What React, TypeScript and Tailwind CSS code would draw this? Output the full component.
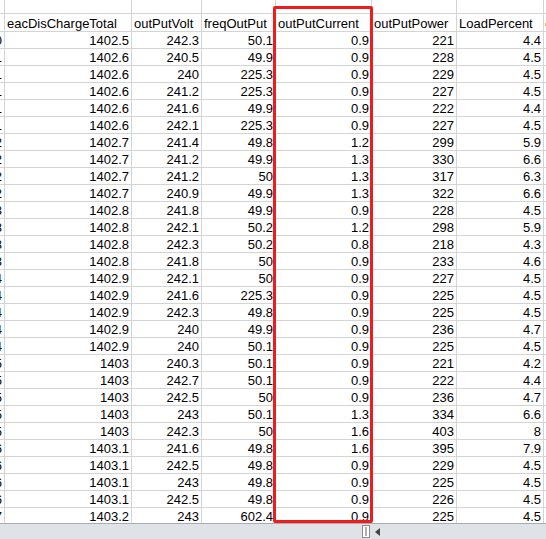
import type React from 'react';

// column widths incl. the 1px right grid line
const COL_W = [
  'w-[5px]',
  'w-[127px]',
  'w-[70px]',
  'w-[74px]',
  'w-[96px]',
  'w-[85px]',
  'w-[87px]',
];

const HEADERS = [
  'eacDisChargeTotal',
  'outPutVolt',
  'freqOutPut',
  'outPutCurrent',
  'outPutPower',
  'LoadPercent',
];

// [clipped digit of previous column, total, volt, freq, current, power, load]
const ROWS: string[][] = [
  ['0', '1402.5', '242.3', '50.1', '0.9', '221', '4.4'],
  ['1', '1402.6', '240.5', '49.9', '0.9', '228', '4.5'],
  ['1', '1402.6', '240', '225.3', '0.9', '229', '4.5'],
  ['1', '1402.6', '241.2', '225.3', '0.9', '227', '4.5'],
  ['1', '1402.6', '241.6', '49.9', '0.9', '222', '4.4'],
  ['1', '1402.6', '242.1', '225.3', '0.9', '227', '4.5'],
  ['2', '1402.7', '241.4', '49.8', '1.2', '299', '5.9'],
  ['2', '1402.7', '241.2', '49.9', '1.3', '330', '6.6'],
  ['2', '1402.7', '241.2', '50', '1.3', '317', '6.3'],
  ['2', '1402.7', '240.9', '49.9', '1.3', '322', '6.6'],
  ['3', '1402.8', '241.8', '49.9', '0.9', '228', '4.5'],
  ['3', '1402.8', '242.1', '50.2', '1.2', '298', '5.9'],
  ['3', '1402.8', '242.3', '50.2', '0.8', '218', '4.3'],
  ['3', '1402.8', '241.8', '50', '0.9', '233', '4.6'],
  ['4', '1402.9', '242.1', '50', '0.9', '227', '4.5'],
  ['4', '1402.9', '241.6', '225.3', '0.9', '225', '4.5'],
  ['4', '1402.9', '242.3', '49.8', '0.9', '225', '4.5'],
  ['4', '1402.9', '240', '49.9', '0.9', '236', '4.7'],
  ['4', '1402.9', '240', '50.1', '0.9', '225', '4.5'],
  ['5', '1403', '240.3', '50.1', '0.9', '221', '4.2'],
  ['5', '1403', '242.7', '50.1', '0.9', '222', '4.4'],
  ['5', '1403', '242.5', '50', '0.9', '236', '4.7'],
  ['5', '1403', '243', '50.1', '1.3', '334', '6.6'],
  ['5', '1403', '242.3', '50', '1.6', '403', '8'],
  ['6', '1403.1', '241.6', '49.8', '1.6', '395', '7.9'],
  ['6', '1403.1', '242.5', '49.8', '0.9', '229', '4.5'],
  ['6', '1403.1', '243', '49.8', '0.9', '225', '4.5'],
  ['6', '1403.1', '242.5', '49.8', '0.9', '226', '4.5'],
  ['7', '1403.2', '243', '602.4', '0.9', '225', '4.5'],
];

const cellBase =
  'shrink-0 h-full border-r border-[#d4d4d4] overflow-hidden whitespace-nowrap flex items-end';

const SheetRow: React.FC<{ cells: string[]; header?: boolean }> = ({
  cells,
  header,
}) => (
  <div
    className={`flex border-b border-[#d4d4d4] ${header ? 'h-[18px]' : 'h-[17px]'}`}
  >
    {COL_W.map((w, i) => (
      <div
        key={i}
        className={`${cellBase} ${w} ${
          header && i > 0 ? 'justify-start pl-[2px]' : 'justify-end pr-[2px]'
        }`}
      >
        <span className="leading-[14px] pb-[0px]">{cells[i] ?? ''}</span>
      </div>
    ))}
    <div className="flex-1 h-full relative">
      {header && (
        <span className="absolute left-[1px] top-[9px] w-[2px] h-[3px] bg-[#f0b050]" />
      )}
    </div>
  </div>
);

const App: React.FC = () => {
  return (
    <div
      className="relative w-[546px] h-[539px] overflow-hidden bg-white text-black text-[13px]"
      style={{ fontFamily: '"Liberation Sans", Arial, sans-serif' }}
    >
      {/* Grid area */}
      <div className="h-[523px] overflow-hidden">
        {/* partial row above the headers */}
        <div className="flex h-[14px] border-b border-[#d4d4d4]">
          {COL_W.map((w, i) => (
            <div key={i} className={`${cellBase} ${w}`} />
          ))}
          <div className="flex-1" />
        </div>
        <SheetRow cells={['', ...HEADERS]} header />
        {ROWS.map((r, i) => (
          <SheetRow key={i} cells={r} />
        ))}
      </div>

      {/* Bottom scrollbar strip */}
      <div className="h-[16px] border-t border-[#a8abb0] bg-[#dfe3e8] flex items-center pl-[362px]">
        <div className="w-[8px] h-[13px] border border-[#8c8c8c] bg-white flex items-center justify-center">
          <div className="w-[2px] h-[9px] border border-[#b0b0b0]" />
        </div>
        <div className="ml-[5px] w-0 h-0 border-y-[4px] border-y-transparent border-r-[5px] border-r-[#444]" />
      </div>

      {/* Red highlight around outPutCurrent */}
      <div className="absolute left-[273px] top-[6px] w-[100px] h-[517px] border-[3px] border-[#ee1c1c] rounded-[2px] pointer-events-none" />
    </div>
  );
};

export default App;
